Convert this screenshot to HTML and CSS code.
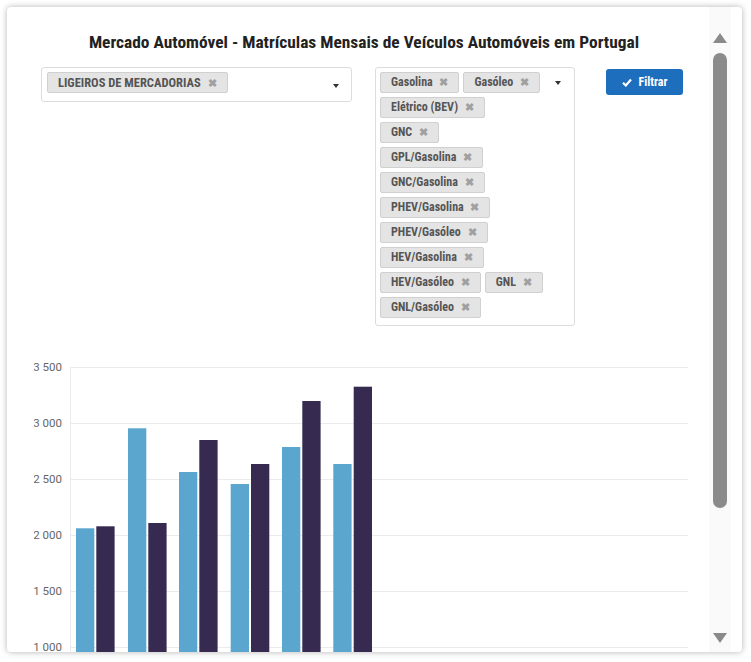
FILE: index.html
```html
<!DOCTYPE html>
<html lang="pt">
<head>
    <meta charset="UTF-8">
    <title>Mercado Automóvel</title>
    <link rel="stylesheet" href="styles.css">
</head>
<body>

<div class="card">
    <div class="content">
        <h1 class="title">Mercado Automóvel - Matrículas Mensais de Veículos Automóveis em Portugal</h1>

        <!-- Filtros -->
        <div class="filters">
            <div class="select select-cat">
                <div class="tags">
                    <span class="tag tag-upper">LIGEIROS DE MERCADORIAS <i>✖</i></span>
                </div>
                <span class="arrow"></span>
            </div>

            <div class="select select-fuel">
                <div class="tags">
                    <span class="tag">Gasolina <i>✖</i></span>
                    <span class="tag">Gasóleo <i>✖</i></span>
                    <span class="tag">Elétrico (BEV) <i>✖</i></span>
                    <span class="tag">GNC <i>✖</i></span>
                    <span class="tag">GPL/Gasolina <i>✖</i></span>
                    <span class="tag">GNC/Gasolina <i>✖</i></span>
                    <span class="tag">PHEV/Gasolina <i>✖</i></span>
                    <span class="tag">PHEV/Gasóleo <i>✖</i></span>
                    <span class="tag">HEV/Gasolina <i>✖</i></span>
                    <span class="tag">HEV/Gasóleo <i>✖</i></span>
                    <span class="tag">GNL <i>✖</i></span>
                    <span class="tag">GNL/Gasóleo <i>✖</i></span>
                </div>
                <span class="arrow"></span>
            </div>

            <button class="btn-filter">
                <svg width="10" height="9" viewBox="0 0 10 9"><path d="M1 4.8 L3.8 7.5 L9 1.5" fill="none" stroke="#fff" stroke-width="2.2"/></svg>
                Filtrar
            </button>
        </div>

        <!-- Gráfico -->
        <svg class="chart" width="660" height="320" viewBox="0 0 660 320">
            <g stroke="#ebebeb" stroke-width="1">
                <line x1="36" y1="19.5" x2="654" y2="19.5"/>
                <line x1="36" y1="75.5" x2="654" y2="75.5"/>
                <line x1="36" y1="131.5" x2="654" y2="131.5"/>
                <line x1="36" y1="187.5" x2="654" y2="187.5"/>
                <line x1="36" y1="243.5" x2="654" y2="243.5"/>
                <line x1="36" y1="299.5" x2="654" y2="299.5"/>
                <line x1="36.5" y1="19" x2="36.5" y2="320"/>
            </g>
            <g class="ylabels" text-anchor="end">
                <text x="28" y="23">3 500</text>
                <text x="28" y="79">3 000</text>
                <text x="28" y="135">2 500</text>
                <text x="28" y="191">2 000</text>
                <text x="28" y="247">1 500</text>
                <text x="28" y="303">1 000</text>
            </g>
            <g fill="#5ba6cf">
                <rect x="42" y="180.3" width="18.3" height="140"/>
                <rect x="94" y="80.3" width="18.3" height="240"/>
                <rect x="145" y="124" width="18.3" height="200"/>
                <rect x="196.7" y="136" width="18.3" height="190"/>
                <rect x="248" y="99" width="18.3" height="230"/>
                <rect x="299.3" y="116" width="18.3" height="210"/>
            </g>
            <g fill="#362a50">
                <rect x="62.3" y="178.3" width="18.3" height="145"/>
                <rect x="114.3" y="175" width="18.3" height="145"/>
                <rect x="165.3" y="92" width="18.3" height="230"/>
                <rect x="217" y="116" width="18.3" height="210"/>
                <rect x="268.3" y="53" width="18.3" height="270"/>
                <rect x="319.7" y="38.7" width="18.3" height="285"/>
            </g>
        </svg>
    </div>

    <!-- Barra de rolagem -->
    <div class="scrollbar">
        <span class="sb-up"></span>
        <span class="sb-thumb"></span>
        <span class="sb-space"></span>
        <span class="sb-down"></span>
    </div>
</div>

</body>
</html>
```

FILE: styles.css
```css
body {
    margin: 0;
    padding: 7px;
    background-color: #fff;
    font-family: "Roboto Condensed", "Liberation Sans Narrow", Roboto, sans-serif;
}

.card {
    width: 735px;
    height: 645px;
    display: flex;
    background-color: #fff;
    border-radius: 4px;
    box-shadow: 0px 0px 6px rgba(0, 0, 0, 0.3);
    overflow: hidden;
}

.content {
    flex: 1;
    padding: 25px 15px 0 27px;
    overflow: hidden;
}

.title {
    margin: 0 0 15px 0;
    font-size: 17.4px;
    line-height: 20px;
    font-weight: bold;
    font-stretch: condensed;
    color: #222;
    text-align: center;
}

.filters {
    display: flex;
    align-items: flex-start;
}

.select {
    display: flex;
    align-items: flex-start;
    border: 1px solid #dcdcdc;
    border-radius: 3px;
    background-color: #fff;
}

.select-cat {
    width: 298px;
    margin-left: 7px;
    padding: 4px 6px 8px 5px;
}

.select-fuel {
    width: 190px;
    margin-left: 23px;
    padding: 4px 4px 7px 4px;
}

.tags {
    flex: 1;
    display: flex;
    flex-wrap: wrap;
    gap: 4px;
}

.tag {
    display: inline-block;
    height: 19px;
    line-height: 19px;
    padding: 0 10px 0 10px;
    border: 1px solid #d0d0d0;
    border-radius: 2px;
    background-color: #e4e4e4;
    color: #555;
    font-size: 12px;
    font-weight: bold;
    font-stretch: condensed;
    white-space: nowrap;
}

.tag-upper {
    font-size: 12.5px;
}

.tag i {
    font-style: normal;
    font-size: 10.5px;
    color: #a0a0a0;
    margin-left: 4px;
}

.arrow {
    width: 0;
    height: 0;
    margin: 9px 9px 0 9px;
    border-left: 3.5px solid transparent;
    border-right: 3.5px solid transparent;
    border-top: 4px solid #333;
}

.select-cat .arrow {
    margin: 12px 6px 0 12px;
}

.btn-filter {
    margin-left: 31px;
    margin-top: 2px;
    width: 77px;
    height: 26px;
    border: none;
    border-radius: 3px;
    background-color: #1d6fbe;
    color: #fff;
    font-family: inherit;
    font-size: 12px;
    font-weight: bold;
    font-stretch: condensed;
    display: flex;
    align-items: center;
    justify-content: center;
    gap: 7px;
}

.chart {
    display: block;
    margin-top: 22px;
}

.ylabels {
    font-family: Roboto, sans-serif;
    font-size: 11.5px;
    fill: #666;
}

.scrollbar {
    width: 22px;
    margin-right: 11px;
    padding: 26px 0 9px 0;
    display: flex;
    flex-direction: column;
    align-items: center;
    background-color: #fafafa;
}

.sb-up {
    width: 0;
    height: 0;
    border-left: 7px solid transparent;
    border-right: 7px solid transparent;
    border-bottom: 10px solid #8a8a8a;
}

.sb-thumb {
    width: 14px;
    height: 455px;
    margin-top: 10px;
    border-radius: 7px;
    background-color: #8a8a8a;
}

.sb-space {
    flex: 1;
}

.sb-down {
    width: 0;
    height: 0;
    border-left: 7px solid transparent;
    border-right: 7px solid transparent;
    border-top: 10px solid #8a8a8a;
}
```
